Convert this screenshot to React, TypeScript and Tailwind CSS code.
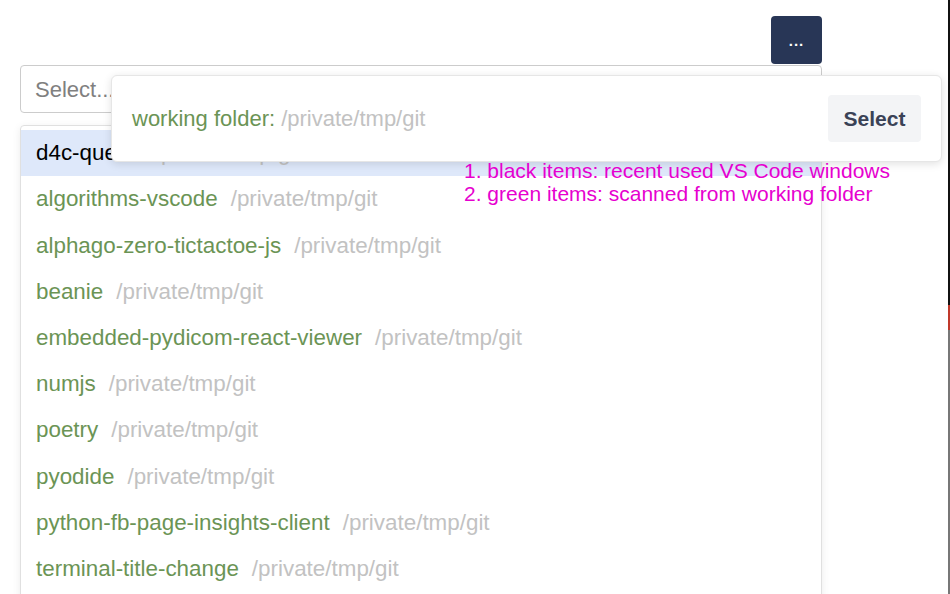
import React from 'react';

const items = [
  { name: 'd4c-queue', path: '/private/tmp/git', recent: true },
  { name: 'algorithms-vscode', path: '/private/tmp/git' },
  { name: 'alphago-zero-tictactoe-js', path: '/private/tmp/git' },
  { name: 'beanie', path: '/private/tmp/git' },
  { name: 'embedded-pydicom-react-viewer', path: '/private/tmp/git' },
  { name: 'numjs', path: '/private/tmp/git' },
  { name: 'poetry', path: '/private/tmp/git' },
  { name: 'pyodide', path: '/private/tmp/git' },
  { name: 'python-fb-page-insights-client', path: '/private/tmp/git' },
  { name: 'terminal-title-change', path: '/private/tmp/git' },
];

const App: React.FC = () => (
  <div className="relative h-[594px] overflow-hidden bg-white font-['Liberation_Sans',sans-serif] text-[22.4px]">
    <div className="ml-5 w-[802px] pt-4">
      <div className="flex justify-end">
        <button className="flex h-12 w-[51px] items-center justify-center rounded bg-[#283656] text-white">
          <span className="text-[15px] font-bold leading-none tracking-[1px]">...</span>
        </button>
      </div>

      <div className="mt-px flex h-12 items-center rounded border border-[#cccccc] px-[14px] text-[22px] text-[#808080]">
        Select...
      </div>

      <div className="mt-3 rounded border border-[#e0e0e0] pt-1 pb-4 shadow-[0_2px_8px_rgba(0,0,0,0.08)]">
        {items.map((it, i) => (
          <div
            key={it.name}
            className={`flex h-[46.2px] items-center gap-[13px] pl-[15px] ${i === 0 ? 'bg-[#dee8fa]' : ''}`}
          >
            <span className={it.recent ? 'text-black' : 'text-[#6b9455]'}>{it.name}</span>
            <span className="text-[#c2c2c2]">{it.path}</span>
          </div>
        ))}
      </div>
    </div>

    {/* working folder popover */}
    <div className="absolute left-[111px] top-[75px] flex w-[831px] items-center justify-between rounded-md border border-[#e6e6e6] bg-white py-[19px] pl-5 pr-5 text-[22px] shadow-[0_2px_8px_rgba(0,0,0,0.12)]">
      <div>
        <span className="text-[#6b9455]">working folder: </span>
        <span className="text-[#c2c2c2]">/private/tmp/git</span>
      </div>
      <button className="h-[47px] w-[93px] rounded bg-[#f3f4f6] text-[21px] font-semibold text-[#3a4256]">Select</button>
    </div>

    {/* annotation */}
    <div className="absolute left-[464px] top-[159px] text-[21px] leading-[23px] text-[#e600cf]">
      <div>1. black items: recent used VS Code windows</div>
      <div>2. green items: scanned from working folder</div>
    </div>

    <div className="absolute right-0 top-0 h-[305px] w-[2px] bg-[#111111]" />
    <div className="absolute right-0 top-[305px] h-[25px] w-[2px] bg-[#c0392b]" />
    <div className="absolute bottom-0 right-0 top-[330px] w-[2px] bg-[#777777]" />
  </div>
);

export default App;
